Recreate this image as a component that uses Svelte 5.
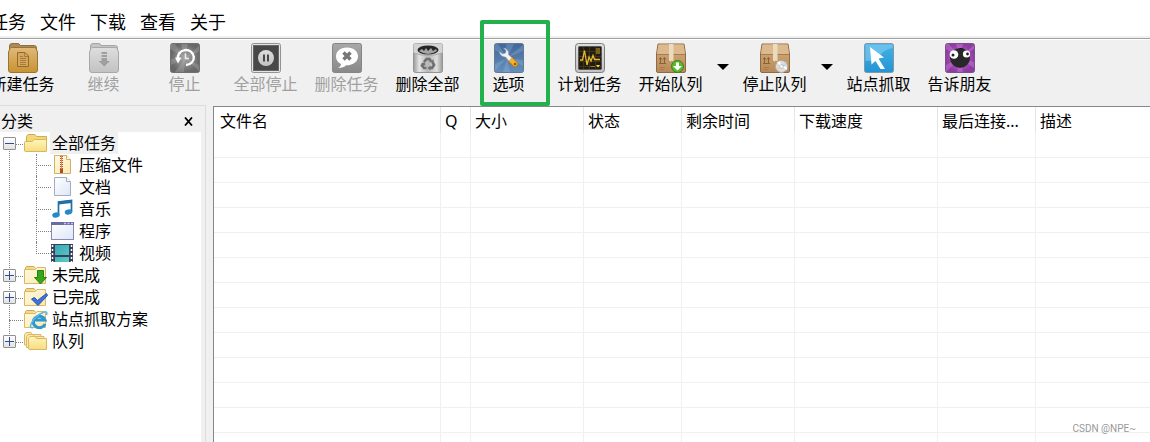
<script>
    let menus = ['任务', '文件', '下载', '查看', '关于']

    let tools = [
        { label: '新建任务', icon: 'new' },
        { label: '继续', icon: 'resume', disabled: true },
        { label: '停止', icon: 'stop', disabled: true },
        { label: '全部停止', icon: 'pause', disabled: true },
        { label: '删除任务', icon: 'remove', disabled: true },
        { label: '删除全部', icon: 'trash' },
        { label: '选项', icon: 'options', marked: true },
        { label: '计划任务', icon: 'schedule' },
        { label: '开始队列', icon: 'queuestart', menu: true },
        { label: '停止队列', icon: 'queuestop', menu: true },
        { label: '站点抓取', icon: 'grab' },
        { label: '告诉朋友', icon: 'friend' },
    ]

    let tree = $state([
        {
            label: '全部任务', icon: 'folder', open: true, children: [
                { label: '压缩文件', icon: 'zip' },
                { label: '文档', icon: 'doc' },
                { label: '音乐', icon: 'music' },
                { label: '程序', icon: 'program' },
                { label: '视频', icon: 'video' },
            ]
        },
        { label: '未完成', icon: 'unfinished', open: false, children: [] },
        { label: '已完成', icon: 'finished', open: false, children: [] },
        { label: '站点抓取方案', icon: 'site' },
        { label: '队列', icon: 'queues', open: false, children: [] },
    ])
    let selected = $state('全部任务')

    let columns = [
        { label: '文件名', cls: 'name' },
        { label: 'Q', cls: 'q' },
        { label: '大小', cls: 'size' },
        { label: '状态', cls: 'status' },
        { label: '剩余时间', cls: 'left' },
        { label: '下载速度', cls: 'speed' },
        { label: '最后连接...', cls: 'last' },
        { label: '描述', cls: 'desc' },
    ]
    let rows = Array(14).fill(0)
</script>

{#snippet box()}
    <path d="M2 1H28L29.500 11V28Q29.500 29.500 28 29.500H2Q.5 29.500 .5 28V11Z" fill="url(#carton)" stroke="#8f6a45"/>
    <path d="M2.500 1.500H27.500L29 11H1Z" fill="#dcb98e"/>
    <path d="M1 11.500H29" stroke="#a67c50"/>
    <path d="M13 1H17.500V18.500L16 17.500L14.500 18.500L13 17.500Z" fill="#eadbc0"/>
    <path d="M4.500 15V20M8.500 15V20M3 20.500H10M3 16.500L4.500 14.500L6 16.500M7 16.500L8.500 14.500L10 16.500" stroke="#8b6238" fill="none"/>
    <path d="M3.500 24.500H9M3.500 26.500H8" stroke="#a67c50"/>
{/snippet}

{#snippet toolIcon(name)}
    <svg class="tool-icon" viewBox="0 0 30 30" aria-hidden="true">
        {#if name == 'new' || name == 'resume'}
            {@const gray = name == 'resume'}
            <path d="M1.500 8V3Q1.500 .5 4 .5H10Q11.500 .5 12 2.500H26.500Q28.500 2.500 28.500 5V8Z" fill={gray ? '#c4c4c4' : '#ad8a55'} stroke={gray ? '#a6a6a6' : '#8c7146'}/>
            <path d="M2 5.500Q2 4.500 3.500 4.500H26.500Q28 4.500 28 5.500L29.500 9V27Q29.500 29.500 27 29.500H3Q.5 29.500 .5 27V9Z" fill={gray ? 'url(#silver)' : 'url(#gold)'} stroke={gray ? '#a8a8a8' : '#99733a'}/>
            {#if gray}
                <path d="M12.500 9H18V11H12.500ZM12.500 12H18V14H12.500ZM12.500 15H18V18H21L15.300 23.500L9.500 18H12.500Z" fill="#9f9f9f"/>
            {:else}
                <path d="M9.500 9.500H17L20.500 13V23.500H9.500Z" fill="#d3a75c" stroke="#94692a"/>
                <path d="M12 13.500H15M12 15.500H18M12 17.500H18M12 19.500H18M12 21.500H18M16.500 10V13.500H20" stroke="#a87c3a" fill="none"/>
            {/if}
        {:else if name == 'stop'}
            <rect x=".5" y=".5" width="29" height="29" rx="2" fill="url(#dark)" stroke="#707070"/>
            <path d="M15 15L0 6V1H5ZM15 15L11 1H18ZM15 15L29 3V9ZM15 15L29 22V28ZM15 15L14 29H5ZM15 15L1 22V16Z" fill="#bbb" opacity=".3"/>
            <path d="M8 16A8 7.500 0 1 1 16 22" fill="none" stroke="#fff" stroke-width="2.400"/>
            <path d="M5 14.500H11.500L8 20.500Z" fill="#fff"/>
            <path d="M15.500 10.500V15.500H19" fill="none" stroke="#eee" stroke-width="1.500"/>
        {:else if name == 'pause'}
            <rect x=".5" y=".5" width="29" height="29" rx="2" fill="#e4e4e4" stroke="#929292"/>
            <rect x="2.500" y="2.500" width="25" height="25" fill="#484848" stroke="#666"/>
            <circle cx="15" cy="15" r="8" fill="url(#silver)"/>
            <path d="M13 11.500V18.500M17 11.500V18.500" stroke="#484848" stroke-width="2"/>
        {:else if name == 'remove'}
            <rect x=".5" y=".5" width="29" height="29" rx="2" fill="url(#midgray)" stroke="#858585"/>
            <path d="M15 4.500C8 4.500 4 8.500 4 13.500C4 17 6 19.700 9 21C9 23 7.500 24 6 25C10 25 12.500 24 14 22.300C21 22.500 26 18.500 26 13.500C26 8.500 22 4.500 15 4.500Z" fill="#fff"/>
            <path d="M11.500 9.500L18.500 16.500M18.500 9.500L11.500 16.500" stroke="#777" stroke-width="3.500"/>
        {:else if name == 'trash'}
            <rect x=".5" y=".5" width="29" height="29" rx="2" fill="url(#steel)" stroke="#949494"/>
            <path d="M.5 10V2Q.5 .5 2 .5H28Q29.500 .5 29.500 2V10Q15 15 .5 10Z" fill="#d4d4d4"/>
            <path d="M1 10Q15 15 29 10" fill="none" stroke="#aaa"/>
            <ellipse cx="15" cy="7" rx="10.500" ry="4.500" fill="#252525"/>
            <path d="M6 8L9 6L11 8L13 5L15 8L18 5L20 8L23 6L24 8Q15 14 6 8Z" fill="#a5a5a5"/>
            <path d="M11 19L13.500 16H16.500L18 18.500M19.500 19L21 22L19 25H16.500M13.500 25H11L9 22.500L10.500 20.500" fill="none" stroke="#707070" stroke-width="2.700"/>
            <path d="M17 19.500H20.500V16ZM17.500 22.500V27.500L14.500 25ZM8 20L12 19.500L12.500 23Z" fill="#707070"/>
        {:else if name == 'options'}
            <rect x=".5" y=".5" width="29" height="29" rx="2" fill="url(#steelblue)" stroke="#62798f"/>
            <path d="M13 15L1 7V1H4ZM13 15L12 1H20ZM13 15L29 2V8ZM13 15L29 17V23ZM13 15L16 29H9ZM13 15L1 28V21Z" fill="#a9c7e8" opacity=".25"/>
            <path d="M16 16L21 21" stroke="#c77411" stroke-width="6" stroke-linecap="round"/>
            <path d="M16 16L21 21" stroke="#f7b325" stroke-width="4.500" stroke-linecap="round"/>
            <circle cx="21" cy="21" r="1.300" fill="#8e5a12"/>
            <path d="M9.500 5A5.500 5.500 0 0 1 14.500 11.500L18 15L15 18L11.500 14A5.500 5.500 0 0 1 5.500 8.500L8.500 11L11.500 10L12 7.500Z" fill="#f2f2f2" stroke="#8499ad" stroke-width=".5"/>
        {:else if name == 'schedule'}
            <rect x=".5" y=".5" width="29" height="29" rx="3" fill="url(#silver)" stroke="#7d7d7d"/>
            <rect x="3.500" y="3.500" width="23" height="23" rx="1" fill="#211b10" stroke="#575757"/>
            <path d="M4 8.500H26M4 13.500H26M4 18.500H26M4 23.500H26M8.500 4V26M14.500 4V26M20.500 4V26" stroke="#40351a"/>
            <path d="M5 17H7.500L9.500 7.500L12 22L14 14L16 18L18 12.500L19.500 16.500H25" fill="none" stroke="#e3b82e" stroke-width="1.300"/>
            <path d="M21 5H25V11H21Z" fill="#77601b"/>
            <path d="M15.500 23.500H20" stroke="#9b7d22"/>
            <path d="M21 22H25L23 24.500Z" fill="#ffe22c"/>
        {:else if name == 'queuestart'}
            {@render box()}
            <circle cx="21.500" cy="23.500" r="6" fill="#5cb82f" stroke="#388318"/>
            <path d="M20 19.500H23V23H26L21.500 27.500L17 23H20Z" fill="#fff"/>
        {:else if name == 'queuestop'}
            {@render box()}
            <circle cx="21.500" cy="23.500" r="6" fill="#ddd" stroke="#aaa"/>
            <path d="M21.500 23.500L17 19.500L20 18ZM21.500 23.500L27 24V27Z" fill="#fff"/>
            <path d="M21.500 23.500L25.500 19L27 21.500Z" fill="#b9d9e6"/>
            <path d="M21.500 23.500L18 28L16 25Z" fill="#e4d4ae"/>
            <circle cx="21.500" cy="23.500" r="1.800" fill="#fff" stroke="#aaa" stroke-width=".7"/>
        {:else if name == 'grab'}
            <rect x=".5" y=".5" width="29" height="29" rx="2" fill="url(#sky)" stroke="#7e99a7"/>
            <path d="M1.500 1.500H28.500V5Q17 7 15 16Q8 18 1.500 18Z" fill="#8bd1f1" opacity=".55"/>
            <path d="M6 4L20 14.500L14.500 15.500L21 26H16.500L11.500 18L7.500 21.500Z" fill="#fff"/>
        {:else if name == 'friend'}
            <rect x=".5" y=".5" width="29" height="29" rx="2" fill="url(#purple)" stroke="#775284"/>
            <path d="M15 15L1 6V1H4ZM15 15L11 1H18ZM15 15L29 2V6ZM15 15L29 19V25ZM15 15L18 29H12ZM15 15L1 29V22Z" fill="#dc91e8" opacity=".35"/>
            <circle cx="15" cy="15" r="10" fill="#292729"/>
            <path d="M14 5.500L16 7L18 5" stroke="#292729" stroke-width="1.500"/>
            <circle cx="9" cy="11.500" r="4.300" fill="#fff"/>
            <circle cx="21.500" cy="11" r="3.600" fill="#fff"/>
            <circle cx="8" cy="12" r="1.500" fill="#222"/>
            <circle cx="22.500" cy="11" r="1.400" fill="#222"/>
        {/if}
    </svg>
{/snippet}

{#snippet treeIcon(name)}
    <svg class="tree-icon" viewBox="0 0 24 20" aria-hidden="true">
        {#if name == 'folder'}
            <path d="M2.500 17V3.500L4 1.500H11L12.500 3.500H22.500V7" fill="#f3d77b" stroke="#cfac50"/>
            <path d="M.5 18V9.500Q.5 8.500 2 8.500H8L10.500 6.500H22.500V18Q22.500 18.500 22 18.500H1.500Z" fill="url(#yellow)" stroke="#d8b65c"/>
        {:else if name == 'unfinished' || name == 'finished' || name == 'site'}
            <path d="M1.500 5V2.500L2.500 1.500H10L11.500 3.500" fill="#f4da84" stroke="#d0a955"/>
            <path d="M.5 18.500V4.500H11.500L13 2.500H21.500V18.500Z" fill="url(#cream)" stroke="#dbb866"/>
            {#if name == 'unfinished'}
                <path d="M13.500 5.500H19.500V12.500H22.500L16.500 19L10.500 12.500H13.500Z" fill="#36a61d" stroke="#23830f"/>
            {:else if name == 'finished'}
                <path d="M7.500 12L10.500 10.500L13.500 13.500L22.500 6.500L23.500 8.500L14 18.500Z" fill="#3d75dc" stroke="#2451b5"/>
            {:else}
                <path d="M21 15A6 5.700 0 1 1 21 11H10" fill="none" stroke="#2898d6" stroke-width="3"/>
                <path d="M9 18.500Q5 19.500 7.500 14Q11 7 19 3.500Q24 1.500 22.500 6" fill="none" stroke="#5bb6e4" stroke-width="1.500"/>
            {/if}
        {:else if name == 'queues'}
            <path d="M.5 14V3.500L2 1.500H7L8.500 3.500H17V15Z" fill="#fae9ad" stroke="#dbb866"/>
            <path d="M2.500 16.500V5.500L4 3.500H9L10.500 5.500H20V17Z" fill="#fae9ad" stroke="#dbb866"/>
            <path d="M4.500 18V7.500L6 5.500H11L12.500 7.500H22.500V18.500H5Z" fill="url(#yellow)" stroke="#dbb866"/>
        {:else if name == 'zip'}
            <path d="M3.500 .5H15.500L19.500 4.500V18.500H3.500Z" fill="url(#cream)" stroke="#ceb16c"/>
            <path d="M15.500 .5V4.500H19.500" fill="#fff" stroke="#ceb16c"/>
            <path d="M10.500 1V15" stroke="#c2502f" stroke-width="3" stroke-dasharray="1 1"/>
            <path d="M10.500 1V15" stroke="#d88e6e"/>
            <path d="M9 14H12V18H9Z" fill="#ac4c31"/>
        {:else if name == 'doc'}
            <path d="M3.500 .5H15.500L19.500 4.500V18.500H3.500Z" fill="url(#paper)" stroke="#a4acbc"/>
            <path d="M15.500 .5V4.500H19.500" fill="#fff" stroke="#a4acbc"/>
        {:else if name == 'music'}
            <path d="M7.500 16V3L20.500 1.500V13" fill="none" stroke="#206fa7" stroke-width="1.700"/>
            <path d="M7.500 2.500L21 1V4L7.500 5.500Z" fill="#206fa7"/>
            <ellipse cx="5" cy="16" rx="3.800" ry="2.600" fill="#2589c9" transform="rotate(-15 5 16)"/>
            <ellipse cx="17.500" cy="13" rx="3.800" ry="2.600" fill="#2589c9" transform="rotate(-15 17.500 13)"/>
        {:else if name == 'program'}
            <rect x=".5" y="1.500" width="22" height="17" fill="url(#paper)" stroke="#8b88b4"/>
            <path d="M0 1H23V4H0Z" fill="#6c69a8"/>
            <path d="M13 2.500H15M16.500 2.500H18.500M20 2.500H22" stroke="#c5c5ea" stroke-width="1.500"/>
        {:else if name == 'video'}
            <path d="M0 1H22V19H0Z" fill="#3b3f5e"/>
            <path d="M4 2H18V12H4ZM4 14H18V19H4Z" fill="url(#teal)"/>
            <path d="M1.500 2V19M20.500 2V19" stroke="#fff" stroke-width="1.500" stroke-dasharray="2 2"/>
        {/if}
    </svg>
{/snippet}

<svg class="defs" aria-hidden="true">
    <defs>
        <linearGradient id="gold" x2="0" y2="1"><stop stop-color="#e0b878"/><stop offset="1" stop-color="#c99331"/></linearGradient>
        <linearGradient id="silver" x2="0" y2="1"><stop stop-color="#dedede"/><stop offset="1" stop-color="#c2c2c2"/></linearGradient>
        <radialGradient id="dark"><stop stop-color="#a8a8a8"/><stop offset="1" stop-color="#686868"/></radialGradient>
        <linearGradient id="midgray" x2="0" y2="1"><stop stop-color="#a8a8a8"/><stop offset="1" stop-color="#898989"/></linearGradient>
        <linearGradient id="steel"><stop stop-color="#999"/><stop offset=".2" stop-color="#e5e5e5"/><stop offset=".5" stop-color="#b5b5b5"/><stop offset=".8" stop-color="#dedede"/><stop offset="1" stop-color="#999"/></linearGradient>
        <linearGradient id="steelblue" x2="0" y2="1"><stop stop-color="#42679a"/><stop offset="1" stop-color="#658fba"/></linearGradient>
        <linearGradient id="carton" x2="0" y2="1"><stop stop-color="#d5ae7c"/><stop offset="1" stop-color="#b78a57"/></linearGradient>
        <linearGradient id="sky" x2="0" y2="1"><stop stop-color="#45b2e8"/><stop offset="1" stop-color="#2394d3"/></linearGradient>
        <radialGradient id="purple"><stop stop-color="#c46fd2"/><stop offset="1" stop-color="#8e3aa3"/></radialGradient>
        <linearGradient id="yellow" x2="0" y2="1"><stop stop-color="#fff6b8"/><stop offset="1" stop-color="#f6dc80"/></linearGradient>
        <linearGradient id="cream" x2="1" y2="1"><stop stop-color="#fffbe0"/><stop offset="1" stop-color="#fbe9ae"/></linearGradient>
        <linearGradient id="paper" x2="1" y2="1"><stop stop-color="#fff"/><stop offset="1" stop-color="#dce7f7"/></linearGradient>
        <linearGradient id="teal" x2="1" y2="1"><stop stop-color="#37a9b5"/><stop offset="1" stop-color="#5accc4"/></linearGradient>
    </defs>
</svg>

<div class="window">
    <nav class="menubar">
        {#each menus as item}
            <button>{item}</button>
        {/each}
    </nav>

    <div class="toolbar">
        {#each tools as tool}
            <button class="tool" disabled={tool.disabled}>
                {@render toolIcon(tool.icon)}
                <span>{tool.label}</span>
                {#if tool.marked}
                    <span class="mark"></span>
                {/if}
            </button>
            {#if tool.menu}
                <button class="drop" aria-label={tool.label}>
                    <svg viewBox="0 0 12 6"><path d="M0 0H12L6 6Z"/></svg>
                </button>
            {/if}
        {/each}
    </div>

    <div class="content">
        <aside>
            <header>
                <h2>分类</h2>
                <button aria-label="关闭">
                    <svg viewBox="0 0 9 9"><path d="M1 .5L8 8.500M8 .5L1 8.500" stroke="#000" stroke-width="1.800"/></svg>
                </button>
            </header>
            <ul class="tree">
                {#each tree as node}
                    <li>
                        <div class="node" class:leaf={!node.children}>
                            {#if node.children}
                                <button class="toggle" aria-label={node.label} aria-expanded={node.open} onclick={() => node.open = !node.open}>
                                    <svg viewBox="0 0 11 11"><path d={node.open ? 'M1 5.5H10' : 'M1 5.5H10M5.5 1V10'} stroke="#2d4e98"/></svg>
                                </button>
                            {/if}
                            {@render treeIcon(node.icon)}
                            <button class="label" class:selected={selected == node.label} onclick={() => selected = node.label}>{node.label}</button>
                        </div>
                        {#if node.open}
                            <ul>
                                {#each node.children as child}
                                    <li class="child">
                                        {@render treeIcon(child.icon)}
                                        <button class="label" class:selected={selected == child.label} onclick={() => selected = child.label}>{child.label}</button>
                                    </li>
                                {/each}
                            </ul>
                        {/if}
                    </li>
                {/each}
            </ul>
        </aside>

        <section class="list">
            <table>
                <thead>
                    <tr>
                        {#each columns as col}
                            <th class={col.cls}>{col.label}</th>
                        {/each}
                    </tr>
                </thead>
                <tbody>
                    {#each rows as row}
                        <tr>
                            {#each columns as col}
                                <td></td>
                            {/each}
                        </tr>
                    {/each}
                </tbody>
            </table>
        </section>
    </div>
    <span class="watermark">CSDN @NPE~</span>
</div>

<style>
    :global(body) {
        background-color: #fff;
    }
    .defs {
        position: absolute;
        width: 0;
        height: 0;
    }
    .window {
        position: relative;
        display: flex;
        flex-direction: column;
        height: 100vh;
        overflow: hidden;
        color: #000;
        font-family: "Noto Sans", "Noto Sans CJK SC", sans-serif;
        font-size: 16px;
        line-height: 22px;
    }
    button {
        padding: 0;
        border: none;
        background: none;
        color: inherit;
        font: inherit;
        white-space: nowrap;
    }
    svg {
        display: block;
        flex: none;
    }
    ul {
        margin: 0;
        padding: 0;
        list-style: none;
    }
    .menubar {
        display: flex;
        gap: 14px;
        margin-left: -10px;
        padding: 9px 0 1px;
        font-size: 18px;
        line-height: 26px;
    }
    .toolbar {
        display: flex;
        padding-bottom: 10px;
        border-top: 2px solid #f0f0f0;
        background-color: #f0f0f0;
    }
    .toolbar::before {
        content: '';
        position: absolute;
        left: 0;
        right: 0;
        height: 1px;
        background-color: #a0a0a0;
        border-bottom: 1px solid #fff;
    }
    .tool {
        position: relative;
        display: flex;
        flex: none;
        flex-direction: column;
        align-items: center;
        width: 81px;
        padding-top: 5px;
    }
    .tool:first-child {
        margin-left: -18px;
    }
    .tool:disabled {
        color: #a0a0a0;
    }
    .tool-icon {
        width: 30px;
        height: 30px;
    }
    .mark {
        position: absolute;
        inset: -18px -1px -11px 12px;
        border: 4px solid #22b14c;
        border-radius: 2px;
        z-index: 1;
    }
    .drop {
        display: flex;
        flex: none;
        align-items: center;
        justify-content: center;
        width: 23px;
    }
    .drop svg {
        width: 12px;
        height: 6px;
    }
    .content {
        display: flex;
        flex: 1;
        min-height: 0;
        background-color: #f0f0f0;
    }
    aside {
        flex: none;
        width: 201px;
        padding-right: 4px;
        border-top: 1px solid #dcdcdc;
        border-right: 1px solid #dcdcdc;
        display: flex;
        flex-direction: column;
    }
    aside header {
        display: flex;
        align-items: flex-end;
        justify-content: space-between;
        height: 26px;
        padding: 0 8px 0 1px;
    }
    aside header button {
        padding-bottom: 6px;
    }
    h2 {
        margin: 0;
        font-size: 16px;
        font-weight: 400;
    }
    aside header svg {
        width: 9px;
        height: 9px;
    }
    .tree {
        flex: 1;
        background-color: #fff;
    }
    .tree li {
        position: relative;
    }
    .tree > li:not(:last-child)::before {
        content: '';
        position: absolute;
        top: 12px;
        bottom: -12px;
        left: 9px;
        border-left: 1px dotted #808080;
    }
    .node {
        position: relative;
        display: flex;
        align-items: center;
        height: 22px;
        padding-left: 3px;
    }
    .node.leaf {
        padding-left: 24px;
    }
    .node::before {
        content: '';
        position: absolute;
        top: 12px;
        left: 10px;
        width: 13px;
        border-top: 1px dotted #808080;
    }
    .toggle {
        position: relative;
        width: 13px;
        height: 13px;
        margin-right: 8px;
        border: 1px solid #919191;
        border-radius: 1px;
        background: linear-gradient(#fff, #e2e2e2);
    }
    .tree-icon {
        position: relative;
        width: 24px;
        height: 20px;
    }
    .label {
        margin-left: 2px;
        padding: 0 2px;
    }
    .label.selected {
        background-color: #f0f0f0;
    }
    .child {
        display: flex;
        align-items: center;
        height: 22px;
        padding-left: 51px;
    }
    .child::before {
        content: '';
        position: absolute;
        top: 0;
        left: 36px;
        width: 14px;
        height: 11px;
        border: 1px dotted #808080;
        border-width: 0 0 1px 1px;
    }
    .child:not(:last-child)::after {
        content: '';
        position: absolute;
        top: 11px;
        bottom: 0;
        left: 36px;
        border-left: 1px dotted #808080;
    }
    .list {
        flex: 1;
        min-width: 0;
        margin: 1px 0 0 7px;
        border-top: 1px solid #828790;
        border-left: 1px solid #828790;
        background-color: #fff;
        overflow: hidden;
    }
    table {
        width: 100%;
        table-layout: fixed;
        border-collapse: separate;
        border-spacing: 0;
    }
    th {
        box-sizing: border-box;
        height: 26px;
        padding: 3px 0 1px 4px;
        border-right: 1px solid #e5e5e5;
        font-weight: 400;
        text-align: left;
        white-space: nowrap;
    }
    td {
        box-sizing: border-box;
        height: 25px;
        padding: 0;
        border-right: 1px solid #f0f0f0;
        border-bottom: 1px solid #f0f0f0;
    }
    th:last-child,
    td:last-child {
        border-right: none;
    }
    .name {
        width: 227px;
        padding-left: 6px;
    }
    .q {
        width: 30px;
    }
    .size,
    .left {
        width: 113px;
    }
    .status,
    .last {
        width: 98px;
    }
    .speed {
        width: 143px;
    }
    .watermark {
        position: absolute;
        right: 14px;
        bottom: 6px;
        color: #999;
        font-family: Roboto, sans-serif;
        font-size: 10px;
        line-height: 14px;
    }
</style>
